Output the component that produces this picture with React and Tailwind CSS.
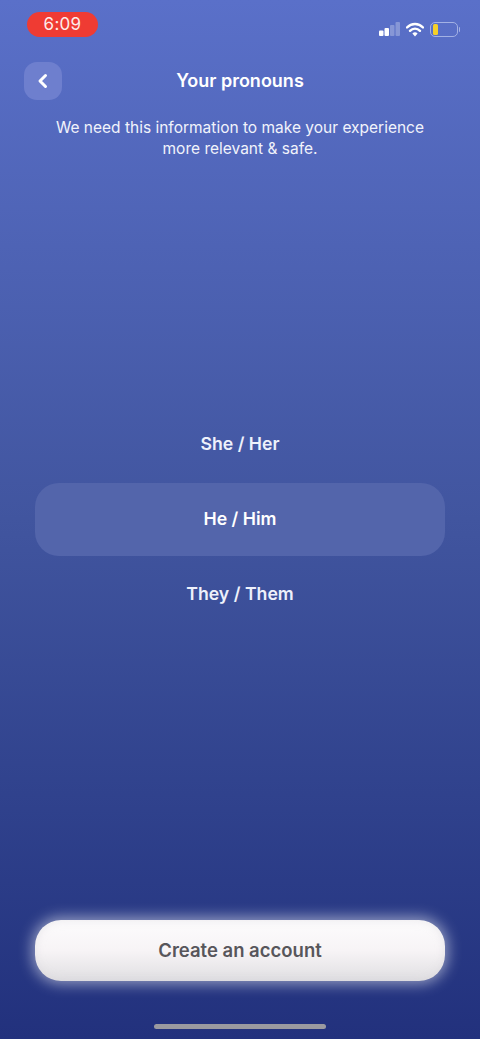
import React from "react";

function StatusIcons() {
  return (
    <div className="flex items-center gap-[6px] mt-[9px]">
      <svg width="21" height="14" viewBox="0 0 21 14">
        <rect x="0" y="8.5" width="4.5" height="5.5" rx="1" fill="#ffffff" />
        <rect x="5.5" y="6" width="4.5" height="8" rx="1" fill="#ffffff" />
        <rect x="11" y="3" width="4.5" height="11" rx="1" fill="#ffffff" fillOpacity="0.28" />
        <rect x="16.5" y="0" width="4.5" height="14" rx="1" fill="#ffffff" fillOpacity="0.28" />
      </svg>
      <svg width="18" height="15" viewBox="0 0 18 15" fill="none">
        <path d="M1 5.5 C5.5 0.8 12.5 0.8 17 5.5" stroke="#ffffff" strokeWidth="2.4" strokeLinecap="round" />
        <path d="M4 8.8 C6.8 5.9 11.2 5.9 14 8.8" stroke="#ffffff" strokeWidth="2.4" strokeLinecap="round" />
        <path d="M6.4 11.4 L9 14.6 L11.6 11.4 C10 10 8 10 6.4 11.4 Z" fill="#ffffff" />
      </svg>
      <div className="flex items-center">
        <div className="w-[28px] h-[15px] rounded-[5px] border border-[#a3b1e4] py-[1px] px-[2px] flex">
          <div className="w-[5px] h-full rounded-[1.5px] bg-[#f5d028]" />
        </div>
        <div className="w-[1.5px] h-[5px] ml-[1px] rounded-r-sm bg-[#a3b1e4]" />
      </div>
    </div>
  );
}

function Pronoun({ label, selected }) {
  return (
    <div
      className={
        "h-[73px] rounded-[24px] flex items-center justify-center text-[17.7px] font-semibold " +
        (selected ? "bg-[#5365ab] text-white" : "text-[#eef1fb]")
      }
    >
      {label}
    </div>
  );
}

export default function App() {
  return (
    <div
      className="relative h-[1039px] w-[480px] overflow-hidden flex flex-col text-white bg-gradient-to-b from-[#5a70c9] via-[#41559f] to-[#22317d]"
      style={{ fontFamily: "'Inter', 'Liberation Sans', sans-serif" }}
    >
      <div className="flex items-center justify-between pl-[27px] pr-[20px] pt-[12px]">
        <div className="w-[71px] h-[25px] rounded-full bg-[#ef3b33] flex items-center justify-center text-[17px] tracking-[0.3px] text-[#fdecea]">
          6:09
        </div>
        <StatusIcons />
      </div>

      <div className="relative mt-[25px] h-[38px] flex items-center justify-center px-[24px]">
        <button className="absolute left-[24px] top-0 w-[38px] h-[38px] rounded-[13px] bg-[#6e7fce] flex items-center justify-center">
          <svg width="14" height="16" viewBox="0 0 14 16" fill="none">
            <path d="M9.5 2.5 L4 8 L9.5 13.5" stroke="#ffffff" strokeWidth="3" strokeLinecap="round" strokeLinejoin="round" />
          </svg>
        </button>
        <h1 className="text-[18px] font-semibold leading-none mb-[1px]">Your pronouns</h1>
      </div>

      <p className="mt-[17px] text-center text-[15.5px] leading-[21px] text-[#f1f3fb]">
        We need this information to make your experience
        <br />
        more relevant &amp; safe.
      </p>

      <div className="mt-[249px] px-[35px] flex flex-col gap-[2px]">
        <Pronoun label="She / Her" />
        <Pronoun label="He / Him" selected />
        <Pronoun label="They / Them" />
      </div>

      <div className="mt-auto px-[35px]">
        <button className="w-full h-[61px] rounded-[26px] bg-gradient-to-b from-[#fdfcfd] via-[#f7f4f6] to-[#e0dfe2] shadow-[0_0_14px_3px_rgba(255,255,255,0.5),inset_0_0_10px_rgba(205,203,210,0.4)] text-[#57565b] text-[18.5px] font-semibold">
          Create an account
        </button>
      </div>

      <div className="mt-[43px] mb-[10px] mx-auto w-[172px] h-[5px] rounded-full bg-[#9a9aa0]" />
    </div>
  );
}
